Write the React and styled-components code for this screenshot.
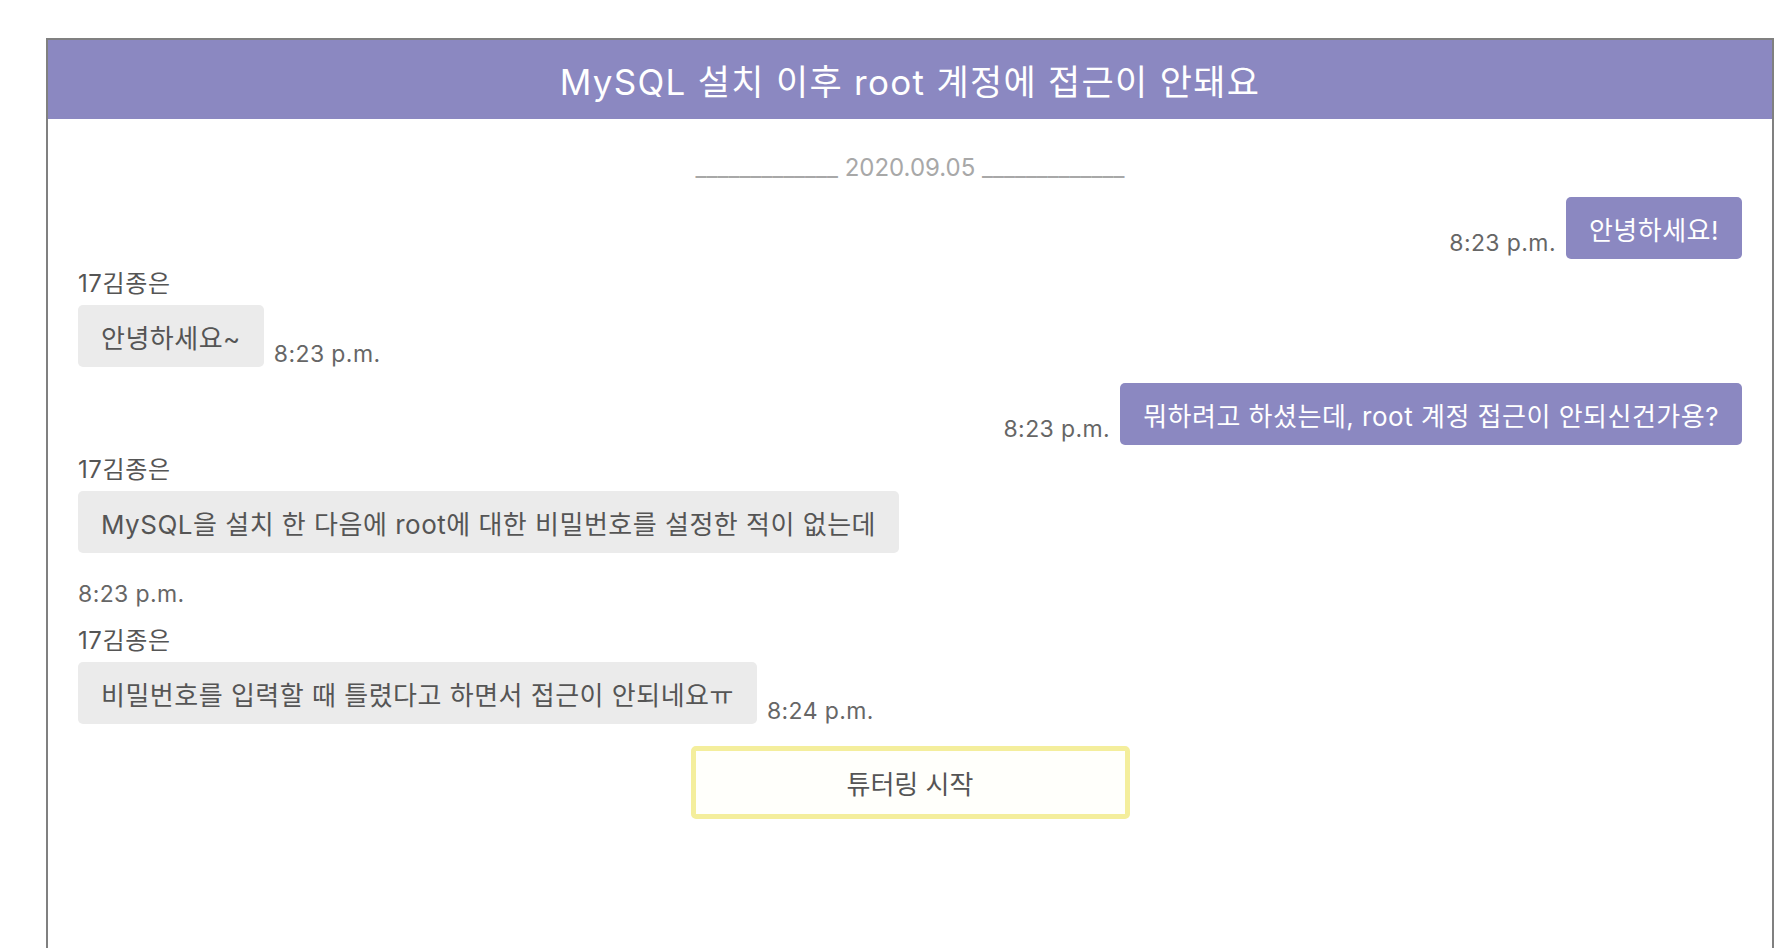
import React from 'react';
import styled, { createGlobalStyle } from 'styled-components';

const messages = [
    { id: 1, mine: true, text: '안녕하세요!', time: '8:23 p.m.' },
    { id: 2, mine: false, name: '17김종은', text: '안녕하세요~', time: '8:23 p.m.' },
    { id: 3, mine: true, text: '뭐하려고 하셨는데, root 계정 접근이 안되신건가용?', time: '8:23 p.m.' },
    { id: 4, mine: false, name: '17김종은', text: 'MySQL을 설치 한 다음에 root에 대한 비밀번호를 설정한 적이 없는데', time: '8:23 p.m.', wrap: true },
    { id: 5, mine: false, name: '17김종은', text: '비밀번호를 입력할 때 틀렸다고 하면서 접근이 안되네요ㅠ', time: '8:24 p.m.' },
];

const App = () => {
    return (
        <>
            <GlobalStyle />
            <Page>
                <ChatRoom>
                    <Header>MySQL 설치 이후 root 계정에 접근이 안돼요</Header>
                    <Body>
                        <DateLine>_____________ 2020.09.05 _____________</DateLine>
                        {messages.map((m) => (
                            <Message key={m.id} $mine={m.mine} $wrap={m.wrap}>
                                {m.name && <Name>{m.name}</Name>}
                                <Row $mine={m.mine} $wrap={m.wrap}>
                                    <Bubble $mine={m.mine}>{m.text}</Bubble>
                                    <Time $mine={m.mine} $wrap={m.wrap}>{m.time}</Time>
                                </Row>
                            </Message>
                        ))}
                        <StartButton>튜터링 시작</StartButton>
                    </Body>
                </ChatRoom>
            </Page>
        </>
    )
}

export default App

const GlobalStyle = createGlobalStyle`
    html, body {
        margin: 0;
        padding: 0;
        background: #fff;
        overflow: hidden;
    }
    body {
        font-family: Inter, "Noto Sans CJK KR", sans-serif;
    }
`

const Page = styled.div`
    padding: 38px 18px 0 46px;
`

const ChatRoom = styled.div`
    border: 2px solid #808080;
    border-bottom: none;
    min-height: 1000px;
    box-sizing: border-box;
`

const Header = styled.div`
    background: #8b88c1;
    color: #fff;
    height: 79px;
    display: flex;
    align-items: center;
    justify-content: center;
    font-size: 35px;
    letter-spacing: 1.3px;
`

const Body = styled.div`
    padding: 34px 30px 0 30px;
    display: flex;
    flex-direction: column;
`

const DateLine = styled.div`
    text-align: center;
    color: #a8a8a8;
    font-size: 24px;
    line-height: 30px;
    margin-bottom: 14px;
    white-space: pre;
`

const Message = styled.div`
    display: flex;
    flex-direction: column;
    align-items: ${(p) => (p.$mine ? 'flex-end' : 'flex-start')};
    margin-bottom: ${(p) => (p.$mine ? '11px' : '16px')};
`

const Name = styled.div`
    color: #555;
    font-size: 24px;
    letter-spacing: 0.6px;
    line-height: 28px;
    margin-bottom: 7px;
`

const Row = styled.div`
    display: flex;
    flex-direction: ${(p) => (p.$wrap ? 'column' : p.$mine ? 'row-reverse' : 'row')};
    align-items: ${(p) => (p.$wrap ? 'flex-start' : 'flex-end')};
    gap: ${(p) => (p.$wrap ? '28px' : '10px')};
`

const Bubble = styled.div`
    background: ${(p) => (p.$mine ? '#8b88c1' : '#ebebeb')};
    color: ${(p) => (p.$mine ? '#fff' : '#555')};
    border-radius: 5px;
    padding: 0 23px;
    height: 62px;
    display: flex;
    align-items: center;
    font-size: 26px;
    letter-spacing: 0.5px;
    white-space: nowrap;
`

const Time = styled.div`
    color: #666;
    font-size: 23px;
    letter-spacing: 0.4px;
    line-height: 26px;
    margin-bottom: ${(p) => (p.$wrap ? '4px' : p.$mine ? '3px' : '0')};
    white-space: nowrap;
`

const StartButton = styled.button`
    align-self: center;
    width: 439px;
    height: 73px;
    margin-top: 6px;
    background: #fffffb;
    border: 5px solid #f4ee9c;
    border-radius: 5px;
    color: #555;
    font-family: Inter, "Noto Sans CJK KR", sans-serif;
    font-size: 26px;
    cursor: pointer;
`
